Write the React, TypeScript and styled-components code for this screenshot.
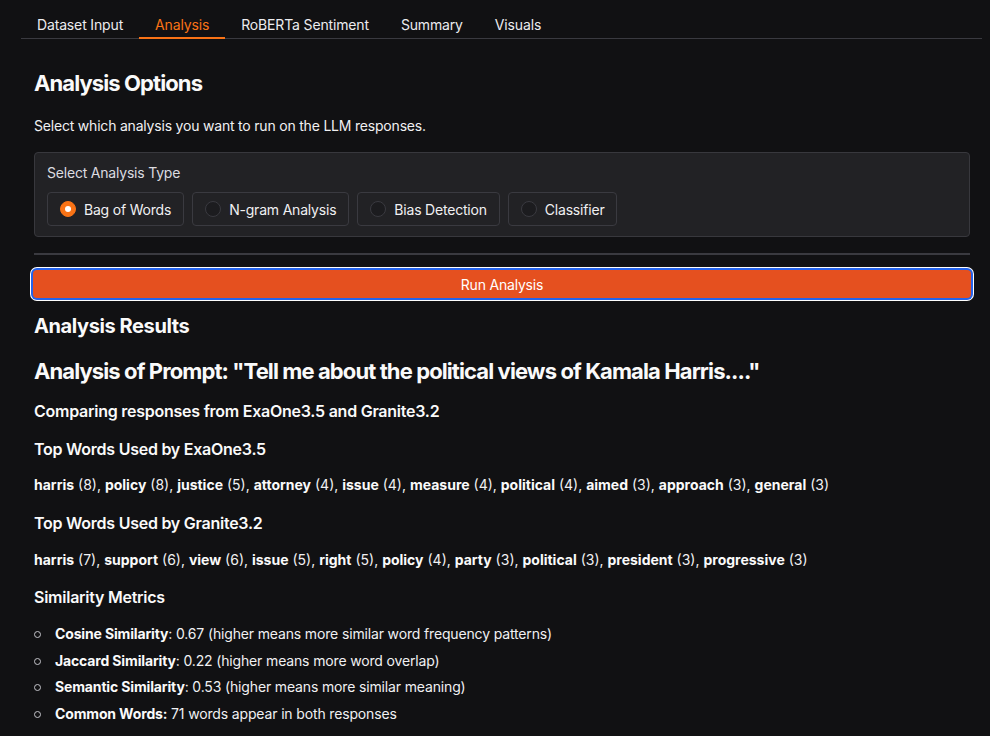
import React from "react";
import styled, { createGlobalStyle } from "styled-components";

const Global = createGlobalStyle`
  html, body { margin: 0; padding: 0; background: #111113; }
  body { font-family: Inter, "Noto Sans", "Liberation Sans", sans-serif; color: #f4f4f5; -webkit-font-smoothing: antialiased; }
  * { box-sizing: border-box; }
`;

const Page = styled.div`
  width: 990px;
  min-height: 736px;
  background: #111113;
  padding: 0 8px 0 21px;
`;

const TabBar = styled.div`
  display: flex;
  align-items: flex-end;
  height: 39px;
  border-bottom: 1px solid #3a3a40;
`;

const Tab = styled.button<{ $active?: boolean }>`
  height: 28px;
  padding: 2px 16px 0;
  margin-bottom: -1px;
  background: none;
  border: none;
  border-bottom: 2px solid ${(p) => (p.$active ? "#f97316" : "transparent")};
  color: ${(p) => (p.$active ? "#f97316" : "#ececef")};
  font-family: inherit;
  font-size: 14px;
  line-height: 20px;
  letter-spacing: -0.15px;
  cursor: pointer;
`;

const Panel = styled.div`
  padding: 30px 12px 0 13px;
  display: flex;
  flex-direction: column;
`;

const H2 = styled.h2<{ $mt?: number }>`
  margin: ${(p) => p.$mt ?? 0}px 0 0;
  font-size: 22px;
  line-height: 28px;
  font-weight: 700;
  color: #fafafa;
  letter-spacing: -0.9px;
`;

const H3 = styled.h3<{ $mt?: number }>`
  margin: ${(p) => p.$mt ?? 0}px 0 0;
  font-size: 20px;
  line-height: 26px;
  font-weight: 700;
  color: #fafafa;
  letter-spacing: -0.4px;
`;

const H4 = styled.h4<{ $mt?: number }>`
  margin: ${(p) => p.$mt ?? 0}px 0 0;
  font-size: 16px;
  line-height: 22px;
  font-weight: 600;
  color: #fafafa;
  letter-spacing: -0.25px;
`;

const P = styled.p<{ $mt?: number }>`
  margin: ${(p) => p.$mt ?? 0}px 0 0;
  font-size: 14px;
  line-height: 20px;
  color: #f0f0f2;
  letter-spacing: -0.2px;
`;

const Box = styled.div`
  margin-top: 16px;
  background: #222225;
  border: 1px solid #38383d;
  border-radius: 4px;
  padding: 10px 12px 10px 12px;
`;

const BoxLabel = styled.div`
  font-size: 14px;
  line-height: 20px;
  color: #dcdce0;
  letter-spacing: -0.2px;
`;

const RadioRow = styled.div`
  margin-top: 9px;
  display: flex;
  gap: 8px;
`;

const RadioItem = styled.label`
  display: flex;
  align-items: center;
  gap: 8px;
  height: 34px;
  padding: 0 12px;
  border: 1px solid #3a3a40;
  border-radius: 4px;
  background: #222225;
  font-size: 14px;
  letter-spacing: -0.2px;
  color: #f0f0f2;
  cursor: pointer;
`;

const Dot = styled.span<{ $on?: boolean }>`
  width: 16px;
  height: 16px;
  border-radius: 50%;
  flex: none;
  background: ${(p) => (p.$on ? "#f97316" : "#1c1c1f")};
  border: 1px solid ${(p) => (p.$on ? "#f97316" : "#3a3a40")};
  display: flex;
  align-items: center;
  justify-content: center;
  &::after {
    content: "";
    width: 6px;
    height: 6px;
    border-radius: 50%;
    background: ${(p) => (p.$on ? "#fff" : "transparent")};
  }
`;

const Rule = styled.div`
  margin-top: 16px;
  height: 2px;
  background: #3a3a40;
`;

const RunButton = styled.button`
  margin-top: 15px;
  margin-left: -1px;
  margin-right: -1px;
  height: 28px;
  background: #e5501f;
  border: none;
  border-radius: 4px;
  color: #fff;
  font-family: inherit;
  font-size: 14px;
  letter-spacing: -0.2px;
  box-shadow: 0 0 0 2px #2563eb, 0 0 0 3px #ffffff;
  cursor: pointer;
`;

const Words = styled.p<{ $mt?: number }>`
  margin: ${(p) => p.$mt ?? 0}px 0 0;
  font-size: 14px;
  line-height: 20px;
  color: #f0f0f2;
  b { font-weight: 700; color: #fafafa; }
`;

const List = styled.ul`
  margin: 13px 0 0;
  padding: 0;
  list-style: none;
`;

const Item = styled.li`
  display: flex;
  align-items: center;
  font-size: 14px;
  line-height: 26.67px;
  letter-spacing: -0.15px;
  color: #f0f0f2;
  white-space: pre;
  b { font-weight: 700; color: #fafafa; }
  &::before {
    content: "";
    flex: none;
    width: 5px;
    height: 5px;
    margin: 0 14px 0 0;
    border: 1px solid #c4c4ca;
    border-radius: 50%;
  }
`;

const exa: [string, number][] = [
  ["harris", 8], ["policy", 8], ["justice", 5], ["attorney", 4], ["issue", 4],
  ["measure", 4], ["political", 4], ["aimed", 3], ["approach", 3], ["general", 3],
];
const gran: [string, number][] = [
  ["harris", 7], ["support", 6], ["view", 6], ["issue", 5], ["right", 5],
  ["policy", 4], ["party", 3], ["political", 3], ["president", 3], ["progressive", 3],
];

const WordList = ({ data, mt }: { data: [string, number][]; mt: number }) => (
  <Words $mt={mt}>
    {data.map(([w, n], i) => (
      <React.Fragment key={w}>
        <b>{w}</b> ({n}){i < data.length - 1 ? ", " : ""}
      </React.Fragment>
    ))}
  </Words>
);

export default function App() {
  const tabs = ["Dataset Input", "Analysis", "RoBERTa Sentiment", "Summary", "Visuals"];
  const opts = ["Bag of Words", "N-gram Analysis", "Bias Detection", "Classifier"];
  return (
    <>
      <Global />
      <Page>
        <TabBar>
          {tabs.map((t) => (
            <Tab key={t} $active={t === "Analysis"}>{t}</Tab>
          ))}
        </TabBar>
        <Panel>
          <H2>Analysis Options</H2>
          <P $mt={19}>Select which analysis you want to run on the LLM responses.</P>
          <Box>
            <BoxLabel>Select Analysis Type</BoxLabel>
            <RadioRow>
              {opts.map((o, i) => (
                <RadioItem key={o}>
                  <Dot $on={i === 0} />
                  {o}
                </RadioItem>
              ))}
            </RadioRow>
          </Box>
          <Rule />
          <RunButton>Run Analysis</RunButton>
          <H3 $mt={15}>Analysis Results</H3>
          <H2 $mt={18}>Analysis of Prompt: "Tell me about the political views of Kamala Harris...."</H2>
          <H4 $mt={15}>Comparing responses from ExaOne3.5 and Granite3.2</H4>
          <H4 $mt={16}>Top Words Used by ExaOne3.5</H4>
          <WordList data={exa} mt={15} />
          <H4 $mt={17}>Top Words Used by Granite3.2</H4>
          <WordList data={gran} mt={16} />
          <H4 $mt={16}>Similarity Metrics</H4>
          <List>
            <Item><b>Cosine Similarity</b>: 0.67 (higher means more similar word frequency patterns)</Item>
            <Item><b>Jaccard Similarity</b>: 0.22 (higher means more word overlap)</Item>
            <Item><b>Semantic Similarity</b>: 0.53 (higher means more similar meaning)</Item>
            <Item><b>Common Words:</b> 71 words appear in both responses</Item>
          </List>
        </Panel>
      </Page>
    </>
  );
}
